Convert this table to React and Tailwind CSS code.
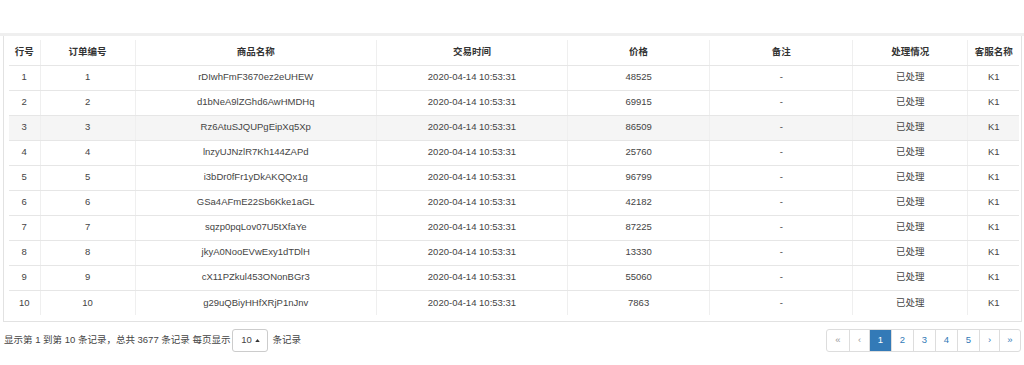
import React from "react";

const rows = [
  ["1", "rDIwhFmF3670ez2eUHEW", "48525"],
  ["2", "d1bNeA9lZGhd6AwHMDHq", "69915"],
  ["3", "Rz6AtuSJQUPgEipXq5Xp", "86509"],
  ["4", "lnzyUJNzlR7Kh144ZAPd", "25760"],
  ["5", "i3bDr0fFr1yDkAKQQx1g", "96799"],
  ["6", "GSa4AFmE22Sb6Kke1aGL", "42182"],
  ["7", "sqzp0pqLov07U5tXfaYe", "87225"],
  ["8", "jkyA0NooEVwExy1dTDlH", "13330"],
  ["9", "cX11PZkul453ONonBGr3", "55060"],
  ["10", "g29uQBiyHHfXRjP1nJnv", "7863"],
];

const widths = [31, 95, 241, 191, 142, 143, 115, 51];
const headers = ["行号", "订单编号", "商品名称", "交易时间", "价格", "备注", "处理情况", "客服名称"];

export default function App() {
  return (
    <div className="w-[1024px] h-[365px] overflow-hidden bg-white text-[9.5px] text-[#444] font-['Liberation_Sans','Noto_Sans_CJK_SC',sans-serif]">
      <div className="h-[33px]" />
      <div className="h-[3px] bg-[#efefef]" />
      <div className="ml-[3px] mr-[2px] border-l border-r border-b border-[#e2e2e2] pl-[5px] pr-[3px] pt-[4px] pb-[6px]">
        <table className="table-fixed border-collapse w-[1010px]">
          <colgroup>
            {widths.map((w, i) => (
              <col key={i} style={{ width: w }} />
            ))}
          </colgroup>
          <thead>
            <tr>
              {headers.map((h, i) => (
                <th
                  key={i}
                  className={`h-[25px] p-0 text-center font-bold text-[#333] border-b border-[#e6e6e6] ${i > 0 ? "border-l border-l-[#efefef]" : ""}`}
                >
                  {h}
                </th>
              ))}
            </tr>
          </thead>
          <tbody>
            {rows.map((r, ri) => (
              <tr key={ri} className={ri === 2 ? "bg-[#f5f5f5]" : ""}>
                {[r[0], r[0], r[1], "2020-04-14 10:53:31", r[2], "-", "已处理", "K1"].map((c, i) => (
                  <td
                    key={i}
                    className={`h-[25px] p-0 text-center ${ri < rows.length - 1 ? "border-b border-[#e6e6e6]" : ""} ${i > 0 ? "border-l border-l-[#efefef]" : ""}`}
                  >
                    {c}
                  </td>
                ))}
              </tr>
            ))}
          </tbody>
        </table>
      </div>
      <div className="flex items-center justify-between mt-[7px] pl-[4px] pr-[3px]">
        <div className="flex items-center">
          <span>显示第 1 到第 10 条记录，总共 3677 条记录 每页显示</span>
          <span className="ml-[2px] mr-[4px] inline-flex items-center justify-center w-[36px] h-[23px] border border-[#ccc] rounded-[3px]">
            <span>10</span>
            <svg width="5" height="3" viewBox="0 0 6 4" className="ml-[3px]">
              <path d="M0 4 L3 0 L6 4 Z" fill="#333" />
            </svg>
          </span>
          <span>条记录</span>
        </div>
        <div className="flex h-[23px] border border-[#ddd] rounded-[3px] overflow-hidden">
          {[
            ["«", "w-[22px] text-[#999]"],
            ["‹", "w-[20px] text-[#999]"],
            ["1", "w-[22px] bg-[#337ab7] text-white"],
            ["2", "w-[22px] text-[#337ab7]"],
            ["3", "w-[22px] text-[#337ab7]"],
            ["4", "w-[22px] text-[#337ab7]"],
            ["5", "w-[22px] text-[#337ab7]"],
            ["›", "w-[20px] text-[#337ab7]"],
            ["»", "w-[21px] text-[#337ab7]"],
          ].map(([t, cls], i) => (
            <span
              key={i}
              className={`flex items-center justify-center ${cls} ${i > 0 ? "border-l border-[#ddd]" : ""}`}
            >
              {t}
            </span>
          ))}
        </div>
      </div>
    </div>
  );
}
